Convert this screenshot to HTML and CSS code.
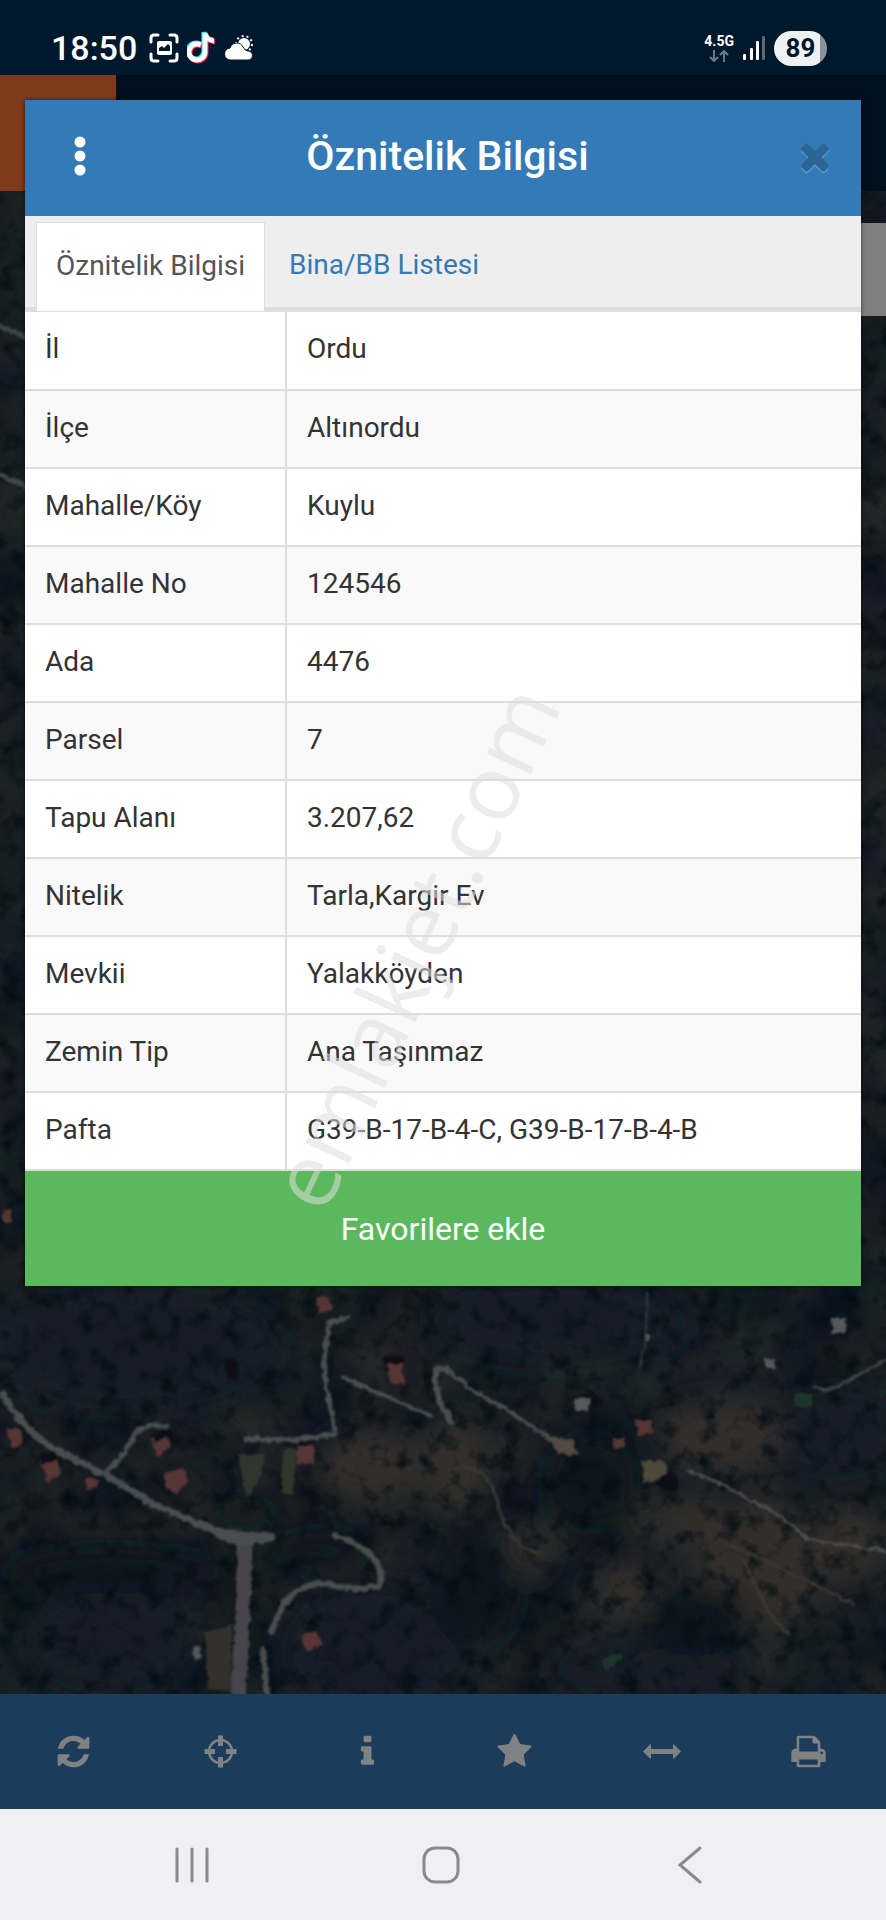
FILE: index.html
```
<!DOCTYPE html>
<html lang="tr">
<head>
<meta charset="utf-8">
<meta name="viewport" content="width=device-width, initial-scale=1">
<title>Öznitelik Bilgisi</title>
<link rel="stylesheet" href="styles.css">
</head>
<body>
<div class="screen">
  <header class="status">
    <div class="status-group">
      <span class="clock">18:50</span>
      <svg class="status-icon" width="30" height="30" viewBox="0 0 30 30" aria-hidden="true">
        <path d="M2 9V5q0-3 3-3h4M21 2h4q3 0 3 3v4M28 21v4q0 3-3 3h-4M9 28H5q-3 0-3-3v-4" fill="none" stroke="#fff" stroke-width="3" stroke-linecap="round"/>
        <rect x="8" y="8" width="15" height="14" rx="2" fill="#fff"/>
        <path d="M10 18v-3l3-2 2 2 4-4 2 2v5z" fill="#00182b"/>
      </svg>
      <svg class="status-icon" width="30" height="34" viewBox="0 0 30 34" aria-hidden="true">
        <g fill="none" stroke-width="5">
          <path d="M14 14a8 8 0 1 0 4 7V2q1 7 9 8" stroke="#25f4ee" transform="translate(-1 -1)"/>
          <path d="M14 14a8 8 0 1 0 4 7V2q1 7 9 8" stroke="#fe2c55" transform="translate(1 1)"/>
          <path d="M14 14a8 8 0 1 0 4 7V2q1 7 9 8" stroke="#fff"/>
        </g>
      </svg>
      <svg class="status-icon" width="28" height="26" viewBox="0 0 28 26" aria-hidden="true">
        <circle cx="19" cy="9" r="6" fill="#fff"/>
        <circle cx="19" cy="9" r="8" fill="none" stroke="#fff" stroke-width="2" stroke-dasharray="2 3"/>
        <path d="M6 25a6 6 0 0 1-1-12 7 7 0 0 1 13-1q2 4 5 4a4 4 0 0 1 0 9z" fill="#fff" stroke="#00182b" stroke-width="1"/>
      </svg>
    </div>
    <div class="status-group status-right">
      <div class="network">
        <span>4.5G</span>
        <svg width="20" height="12" viewBox="0 0 20 12" aria-hidden="true"><path d="M5 0v11M1 7l4 4 4-4M15 12V1M11 5l4-4 4 4" fill="none" stroke="#6d7a86" stroke-width="2"/></svg>
      </div>
      <svg class="signal" width="24" height="24" viewBox="0 0 24 24" aria-hidden="true">
        <g fill="#fff"><rect x="1" y="18" width="3" height="6" rx="1"/><rect x="8" y="12" width="3" height="12" rx="1"/><rect x="14" y="5" width="3" height="19" rx="1"/></g>
        <rect x="20" y="0" width="3" height="24" rx="1" fill="#5c6975"/>
      </svg>
      <span class="battery">89</span>
    </div>
  </header>

  <div class="app-bar"><div class="app-logo"></div></div>

  <main class="map">
    <svg class="map-image" viewBox="0 0 886 1503" preserveAspectRatio="xMidYMid slice" role="img" aria-label="Uydu haritası">
      <defs>
        <filter id="ground" x="0" y="0" width="100%" height="100%" color-interpolation-filters="sRGB">
          <feTurbulence type="fractalNoise" baseFrequency="0.014" numOctaves="5" seed="8"/>
          <feColorMatrix values="0.14 0 0 0 0.020  0.11 0.06 0 0 0.030  0.05 0 0.05 0 0.085  0 0 0 0 1"/>
        </filter>
        <filter id="trees" x="0" y="0" width="100%" height="100%" color-interpolation-filters="sRGB">
          <feTurbulence type="fractalNoise" baseFrequency="0.05" numOctaves="4" seed="21"/>
          <feColorMatrix values="0 0 0 0 0.010  0 0 0 0 0.045  0 0 0 0 0.070  2.200 0 0 0 -1.050"/>
        </filter>
        <filter id="soft" x="-30%" y="-30%" width="160%" height="160%"><feGaussianBlur stdDeviation="14"/></filter>
        <filter id="fine" x="-10%" y="-10%" width="120%" height="120%">
          <feTurbulence type="fractalNoise" baseFrequency="0.15" numOctaves="2" seed="4" result="n"/>
          <feDisplacementMap in="SourceGraphic" in2="n" scale="6" xChannelSelector="R" yChannelSelector="G"/>
          <feGaussianBlur stdDeviation="1.100"/>
        </filter>
      </defs>
      <rect width="886" height="1503" fill="#151e24"/>
      <rect width="886" height="1503" filter="url(#ground)"/>
      <g filter="url(#soft)">
        <g fill="#151d25">
          <ellipse cx="130" cy="1155" rx="150" ry="65"/><ellipse cx="560" cy="1130" rx="130" ry="45"/>
          <ellipse cx="375" cy="1460" rx="95" ry="70"/><ellipse cx="655" cy="1480" rx="110" ry="28"/>
          <ellipse cx="835" cy="1245" rx="70" ry="45"/><ellipse cx="110" cy="1450" rx="85" ry="55"/>
        </g>
        <g fill="#302f2b">
          <ellipse cx="370" cy="1275" rx="55" ry="38"/><ellipse cx="455" cy="1275" rx="35" ry="50"/>
          <ellipse cx="720" cy="1245" rx="65" ry="38"/><ellipse cx="760" cy="1375" rx="70" ry="65"/>
          <ellipse cx="625" cy="1400" rx="35" ry="32"/><ellipse cx="850" cy="1350" rx="40" ry="35"/>
          <ellipse cx="520" cy="1360" rx="30" ry="28"/><ellipse cx="700" cy="1330" rx="65" ry="20"/>
        </g>
        <g fill="#0b191f">
          <ellipse cx="110" cy="1380" rx="110" ry="22"/><ellipse cx="475" cy="1400" rx="45" ry="60"/>
          <ellipse cx="695" cy="1430" rx="55" ry="35"/><ellipse cx="590" cy="1290" rx="45" ry="45"/>
          <ellipse cx="320" cy="1360" rx="45" ry="18"/><ellipse cx="245" cy="1320" rx="28" ry="14"/>
        </g>
      </g>
      <rect width="886" height="1503" filter="url(#trees)"/>
      <g filter="url(#fine)">
        <g fill="none" stroke="#4a4d4e" stroke-linecap="round" stroke-linejoin="round">
          <path d="M3 1203Q18 1233 51 1256L113 1288 153 1313 218 1341 271 1346" stroke-width="7"/>
          <path d="M105 1282 121 1267 137 1240 151 1234 167 1236" stroke-width="5"/>
          <path d="M245 1352 243 1423 238 1503" stroke-width="15" stroke="#46444c"/>
          <path d="M218 1343 243 1351 271 1346" stroke-width="9"/>
          <path d="M349 1126 329 1132 324 1168 326 1196 336 1243 293 1249 245 1248" stroke-width="5"/>
          <path d="M343 1186 378 1202 408 1215 431 1225" stroke-width="4"/>
          <path d="M450 1180Q434 1172 435 1188L440 1212 451 1231" stroke-width="6"/>
          <path d="M436 1177Q453 1181 473 1200L508 1219 543 1243 563 1255" stroke-width="4"/>
          <path d="M335 1344Q390 1365 379 1395 353 1401 323 1392 293 1395 281 1418L271 1441" stroke-width="6"/>
          <path d="M263 1458 267 1503" stroke-width="6"/>
          <path d="M688 1279Q723 1293 748 1308L778 1323 808 1348 885 1360" stroke-width="3"/>
          <path d="M647 1103 646 1148 638 1183" stroke-width="2" stroke="#30373b"/>
          <path d="M815 1196Q828 1203 845 1191L886 1169" stroke-width="3" stroke="#3e4446"/>
          <path d="M448 1278Q488 1268 498 1313T543 1363M743 1368 768 1420 788 1443M718 1348 803 1388 853 1413" stroke-width="3" stroke="#373733"/>
          <path d="M0 135 29 147M0 284 29 297" stroke-width="5" stroke="#404747"/>
        </g>
        <g transform="translate(3 3)">
          <path d="M544 1241 570 1247 576 1261 556 1260z" fill="#514943"/>
          <path d="M234 1260 262 1260 255 1290 244 1303z" fill="#33342f"/>
          <path d="M281 1255h13l-4 45h-12z" fill="#2f382b"/>
          <path d="M202 1438 229 1430 227 1496 205 1495z" fill="#30322c"/>
          <g fill="#593534">
            <path d="M3 1235 18 1235 20 1250 9 1254zM37 1267 53 1264 58 1280 45 1288zM82 1285h12v9l-10 2zM148 1244l14-5 6 13-15 12zM161 1280l19-6 5 13-12 13-12-8zM294 1252h17v18h-17zM314 1103h13l2 13-13 3zM385 1170h14l2 20-14-2zM298 1442l15-5 7 14-16 7zM632 1227h16l3 11-15 4zM610 1245h12v9h-12zM0 1015h8v13H0z"/>
          </g>
          <g fill="#070f17"><path d="M381 1163h20v7h-20zM222 1163l12 5 1 18h-11zM37 1262l16-6 3 8-17 6zM148 1241l18-7v7l-14 8zM573 1203l15-6 12 12-14 6zM656 1283l10-5 10 5-3 11-16 2z"/></g>
          <g fill="#55595b"><path d="M829 1124h14v15h-14zM762 1165h10v9h-10zM572 1205h14v12h-14zM190 1455l6-3 3 11-8 4zM642 1140h5v8h-5z"/></g>
          <path d="M640 1267h22l2 12-13 8-11 2z" fill="#4d4a3a"/>
          <path d="M792 1200h17v14l-17-2zM600 1465l18-8v8l-15 14z" fill="#1c3529"/>
        </g>
      </g>
    </svg>
    <button class="map-control" type="button" aria-label="Harita katmanları"></button>
  </main>

  <nav class="toolbar" aria-label="Harita araçları">
    <button type="button" aria-label="Yenile"><svg width="37" height="37" viewBox="0 0 1792 1792"><path d="M1639 1056q0 5-1 7-64 268-268 434.500t-478 166.500q-146 0-282.500-55t-243.500-157l-129 129q-19 19-45 19t-45-19-19-45v-448q0-26 19-45t45-19h448q26 0 45 19t19 45-19 45l-137 137q71 66 161 102t187 36q134 0 250-65t186-179q11-17 53-117 8-23 30-23h192q13 0 22.500 9.500t9.500 22.500zm25-800v448q0 26-19 45t-45 19h-448q-26 0-45-19t-19-45 19-45l138-138q-148-137-349-137-134 0-250 65t-186 179q-11 17-53 117-8 23-30 23h-199q-13 0-22.500-9.500t-9.500-22.500v-7q65-268 270-434.500t480-166.500q146 0 284 55.500t245 156.500l130-129q19-19 45-19t45 19 19 45z"/></svg></button>
    <button type="button" aria-label="Konum"><svg width="37" height="37" viewBox="0 0 37 37"><circle cx="18.500" cy="18.500" r="11.500" fill="none" stroke="currentColor" stroke-width="2.500"/><path d="M16 2.500h5v10.500h-5zM16 24h5v10.500h-5zM2.500 16h10.500v5H2.500zM24 16h10.500v5H24z"/></svg></button>
    <button type="button" aria-label="Bilgi"><svg width="37" height="37" viewBox="0 0 1792 1792"><path d="M1216 1344v128q0 26-19 45t-45 19h-512q-26 0-45-19t-19-45v-128q0-26 19-45t45-19h64v-384h-64q-26 0-45-19t-19-45v-128q0-26 19-45t45-19h384q26 0 45 19t19 45v576h64q26 0 45 19t19 45zm-128-1152v192q0 26-19 45t-45 19h-256q-26 0-45-19t-19-45v-192q0-26 19-45t45-19h256q26 0 45 19t19 45z"/></svg></button>
    <button type="button" aria-label="Favoriler"><svg width="37" height="37" viewBox="0 0 1792 1792"><path d="M1728 647q0 22-26 48l-363 354 86 500q1 7 1 20 0 21-10.500 35.500t-30.500 14.500q-19 0-40-12l-449-236-449 236q-22 12-40 12-21 0-31.500-14.500t-10.500-35.500q0-6 2-20l86-500-364-354q-25-27-25-48 0-37 56-46l502-73 225-455q19-41 49-41t49 41l225 455 502 73q56 9 56 46z"/></svg></button>
    <button type="button" aria-label="Ölçüm"><svg width="38" height="37" viewBox="0 0 38 37"><path d="M0 18.500 7 11.500h1v4.500h22v-4.500h1l7 7-7 7h-1V21H8v4.500H7z"/></svg></button>
    <button type="button" aria-label="Yazdır"><svg width="37" height="37" viewBox="0 0 1792 1792"><path d="M448 1536h896v-256h-896v256zm0-640h896v-384h-160q-40 0-68-28t-28-68v-160h-640v640zm1152 64q0-26-19-45t-45-19-45 19-19 45 19 45 45 19 45-19 19-45zm128 0v416q0 13-9.500 22.500t-22.500 9.500h-224v160q0 40-28 68t-68 28h-960q-40 0-68-28t-28-68v-160h-224q-13 0-22.500-9.500t-9.500-22.500v-416q0-79 56.500-135.500t135.500-56.500h64v-544q0-40 28-68t68-28h672q40 0 88 20t76 48l152 152q28 28 48 76t20 88v256h64q79 0 135.500 56.500t56.500 135.500z"/></svg></button>
  </nav>

  <nav class="system-nav" aria-label="Sistem gezintisi">
    <button type="button" aria-label="Son uygulamalar"><svg width="36" height="38" viewBox="0 0 36 38"><path d="M3 3v32M18 3v32M33 3v32"/></svg></button>
    <button type="button" aria-label="Ana ekran"><svg width="38" height="38" viewBox="0 0 38 38"><rect x="2" y="2" width="34" height="34" rx="11"/></svg></button>
    <button type="button" aria-label="Geri"><svg width="28" height="40" viewBox="0 0 28 40"><path d="M24 3 4 20 24 37"/></svg></button>
  </nav>

  <section class="dialog" role="dialog" aria-labelledby="dialog-title">
    <div class="dialog-head">
      <button class="head-button" type="button" aria-label="Menü"><svg width="12" height="40" viewBox="0 0 12 40"><circle cx="6" cy="6" r="5.500"/><circle cx="6" cy="20" r="5.500"/><circle cx="6" cy="34" r="5.500"/></svg></button>
      <h1 id="dialog-title">Öznitelik Bilgisi</h1>
      <button class="head-button close" type="button" aria-label="Kapat"><svg width="42" height="42" viewBox="0 0 1792 1792"><path d="M1490 1322q0 40-28 68l-136 136q-28 28-68 28t-68-28l-294-294-294 294q-28 28-68 28t-68-28l-136-136q-28-28-28-68t28-68l294-294-294-294q-28-28-28-68t28-68l136-136q28-28 68-28t68 28l294 294 294-294q28-28 68-28t68 28l136 136q28 28 28 68t-28 68l-294 294 294 294q28 28 28 68z"/></svg></button>
    </div>
    <div class="tabs" role="tablist">
      <button class="tab active" type="button" role="tab" aria-selected="true">Öznitelik Bilgisi</button>
      <button class="tab" type="button" role="tab" aria-selected="false">Bina/BB Listesi</button>
    </div>
    <table class="attributes">
      <tbody>
        <tr><th scope="row">İl</th><td>Ordu</td></tr>
        <tr><th scope="row">İlçe</th><td>Altınordu</td></tr>
        <tr><th scope="row">Mahalle/Köy</th><td>Kuylu</td></tr>
        <tr><th scope="row">Mahalle No</th><td>124546</td></tr>
        <tr><th scope="row">Ada</th><td>4476</td></tr>
        <tr><th scope="row">Parsel</th><td>7</td></tr>
        <tr><th scope="row">Tapu Alanı</th><td>3.207,62</td></tr>
        <tr><th scope="row">Nitelik</th><td>Tarla,Kargir Ev</td></tr>
        <tr><th scope="row">Mevkii</th><td>Yalakköyden</td></tr>
        <tr><th scope="row">Zemin Tip</th><td>Ana Taşınmaz</td></tr>
        <tr><th scope="row">Pafta</th><td>G39-B-17-B-4-C, G39-B-17-B-4-B</td></tr>
      </tbody>
    </table>
    <button class="favorite" type="button">Favorilere ekle</button>
  </section>

  <div class="watermark">emlakjet.com</div>
</div>
</body>
</html>
```
FILE: styles.css
```
* {
  box-sizing: border-box;
}

body {
  margin: 0;
  background: #121b22;
  font-family: Roboto, "Liberation Sans", sans-serif;
}

button {
  margin: 0;
  padding: 0;
  border: 0;
  background: none;
  color: inherit;
  font: inherit;
  cursor: pointer;
}

svg {
  display: block;
  flex: none;
}

.screen {
  position: relative;
  display: flex;
  flex-direction: column;
  min-height: 100vh;
  overflow: hidden;
}

/* Status bar */
.status {
  display: flex;
  justify-content: space-between;
  height: 75px;
  padding: 21px 59px 0 51px;
  background: #00182b;
  color: #fff;
}

.status-group {
  display: flex;
  align-items: center;
  height: 54px;
  gap: 8px;
}

.clock {
  margin-right: 4px;
  font-size: 34px;
  font-weight: 500;
}

.network {
  display: flex;
  flex-direction: column;
  align-items: center;
  gap: 1px;
  font-size: 14px;
  font-weight: 700;
  line-height: 15px;
}

.battery {
  width: 53px;
  border-radius: 18px;
  background: linear-gradient(to right, #eef1f4 46px, #8a939c 46px);
  color: #00182b;
  font-size: 26px;
  font-weight: 700;
  line-height: 35px;
  text-align: center;
}

/* App bar and map */
.app-bar {
  height: 116px;
  background: #000f1c;
}

.app-logo {
  width: 116px;
  height: 100%;
  background: #80391b;
}

.map {
  position: relative;
  flex: 1;
  min-height: 1120px;
}

.map-image {
  position: absolute;
  width: 100%;
  height: 100%;
}

.map-control {
  position: absolute;
  top: 32px;
  right: 0;
  width: 60px;
  height: 93px;
  background: #808080;
}

/* Bottom bars */
.toolbar {
  position: relative;
  display: flex;
  height: 115px;
  padding-right: 4px;
  background: #1b3d5b;
  color: #7f8182;
  fill: currentColor;
}

.toolbar button,
.system-nav button {
  display: flex;
  flex: 1;
  align-items: center;
  justify-content: center;
}

.system-nav {
  position: relative;
  display: flex;
  height: 111px;
  padding: 0 72px 0 68px;
  background: #f0f0f2;
  fill: none;
  stroke: #8a8a8c;
  stroke-width: 3;
  stroke-linecap: round;
}

/* Dialog */
.dialog {
  position: absolute;
  top: 100px;
  right: 25px;
  left: 25px;
  background: #fff;
  box-shadow: 0 0 4px rgba(0, 0, 0, 0.6);
  color: #333;
  font-size: 28px;
}

.dialog-head {
  display: flex;
  align-items: center;
  justify-content: space-between;
  height: 116px;
  padding: 0 16px 4px 25px;
  background: #337ab7;
  color: #fff;
}

.dialog-head h1 {
  margin: 0;
  font-size: 41px;
  font-weight: 500;
}

.head-button {
  display: flex;
  align-items: center;
  justify-content: center;
  width: 60px;
  height: 60px;
  fill: #fff;
}

.close {
  fill: #2b6595;
  filter: drop-shadow(0 2px 0 #5c95c5);
}

.tabs {
  display: flex;
  align-items: flex-end;
  height: 95px;
  padding-left: 11px;
  background: linear-gradient(to top, #ddd 4px, #eee 4px);
  color: #337ab7;
}

.tab {
  height: 89px;
  padding: 0 24px 4px;
}

.tab.active {
  padding: 0 19px 4px;
  border: 1px solid #ddd;
  border-bottom: 0;
  background: #fff;
  color: #555;
}

.attributes {
  width: 100%;
  border-collapse: separate;
  border-spacing: 0;
  border-bottom: 2px solid #ddd;
  table-layout: fixed;
}

.attributes th,
.attributes td {
  height: 78px;
  padding: 0 20px 3px;
  border-top: 2px solid #ddd;
  font-weight: 400;
  line-height: 40px;
  text-align: left;
}

.attributes th {
  width: 260px;
}

.attributes td {
  border-left: 2px solid #ddd;
}

.attributes tr:first-child th,
.attributes tr:first-child td {
  border-top-width: 1px;
}

.attributes tr:nth-child(even) {
  background: #f9f9f9;
}

.favorite {
  display: block;
  width: 100%;
  height: 115px;
  background: #5cb85c;
  color: #fff;
  font-size: 32px;
}

.watermark {
  position: absolute;
  top: 946px;
  left: 46.5%;
  color: rgba(222, 222, 222, 0.55);
  font-family: "Open Sans", "Noto Sans", sans-serif;
  font-size: 90px;
  line-height: 1;
  pointer-events: none;
  transform: translate(-50%, -50%) rotate(-65deg);
}
```
